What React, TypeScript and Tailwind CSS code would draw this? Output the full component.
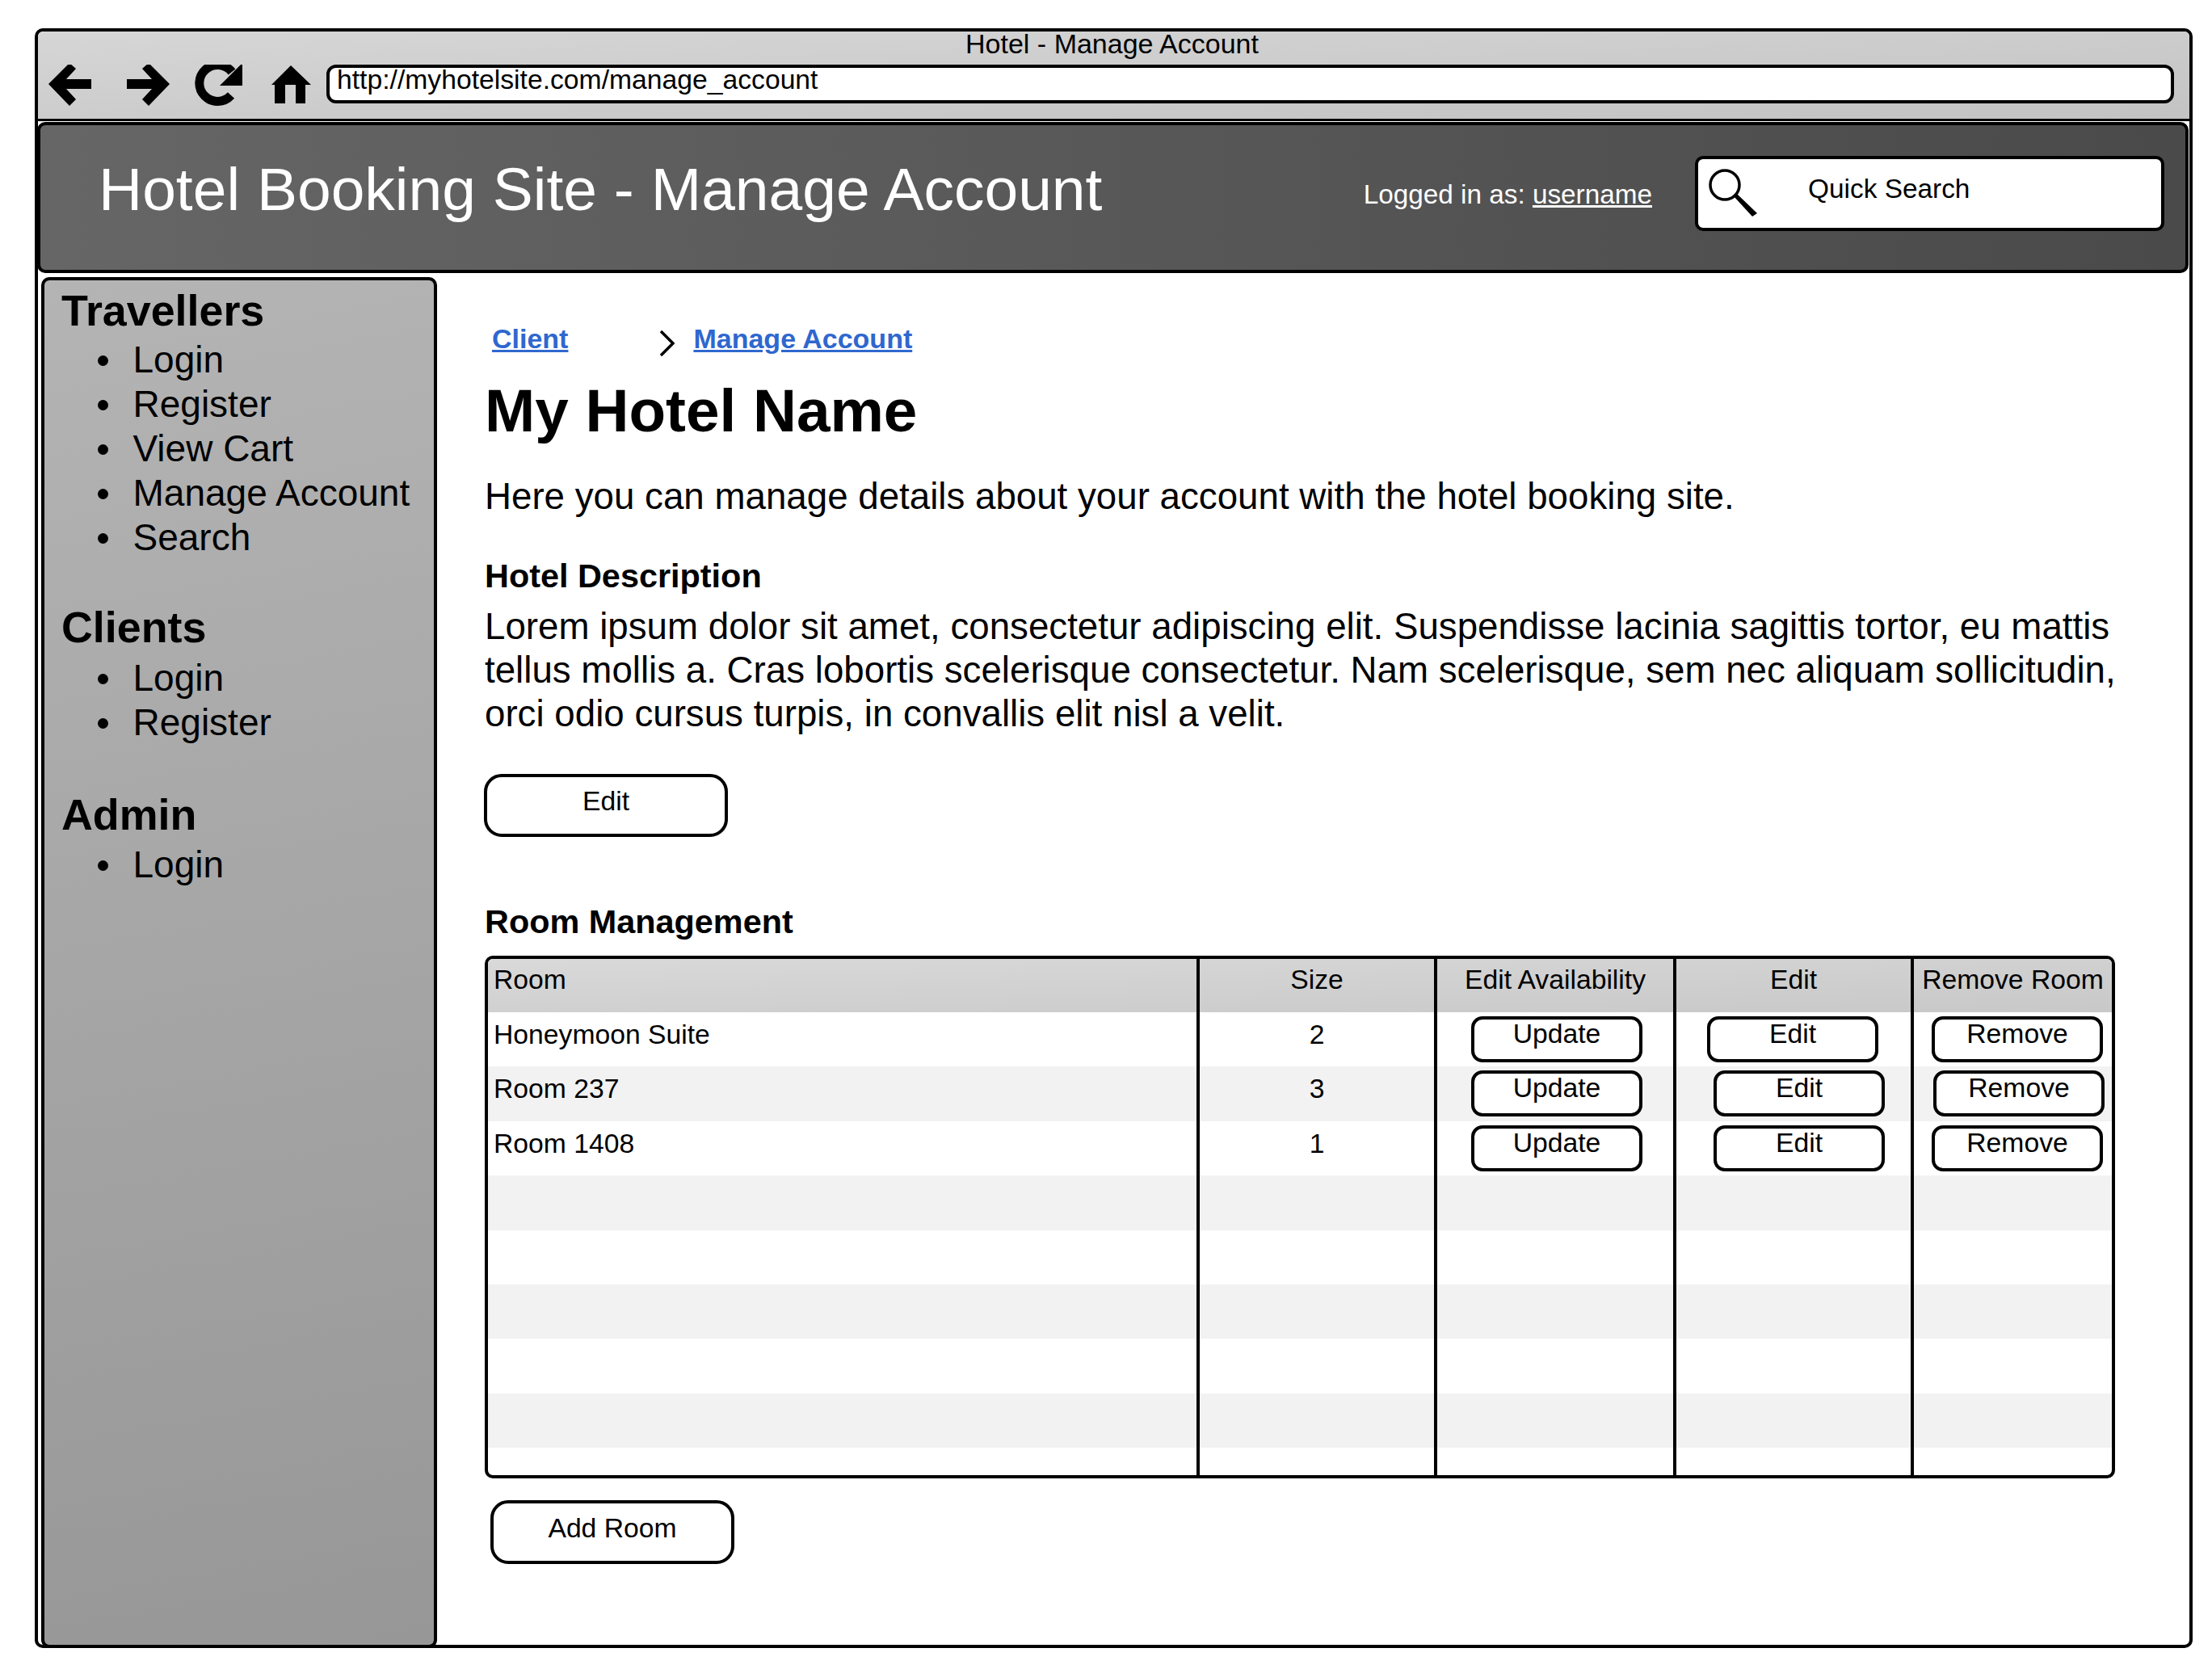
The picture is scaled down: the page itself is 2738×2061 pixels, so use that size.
import React from "react";

const font = { fontFamily: '"Liberation Sans", Arial, sans-serif' };

function NavIcons() {
  return (
    <svg className="shrink-0 w-[354px] h-[52px]" viewBox="3 20 354 52">
      <polygon points="16,44 42,18 50,25 38,38 69,38 69,50 38,50 50,63 42,71" fill="#000" />
      <polygon points="166,44 140,18 132,25 144,38 113,38 113,50 144,50 132,63 140,71" fill="#000" />
      <path d="M242 58 A22.5 22.5 0 1 1 243 29" fill="none" stroke="#000" strokeWidth="11" />
      <polygon points="256,18 256,46 228,46" fill="#000" />
      <polygon points="316,21 341,45 334,45 334,68 322,68 322,45 309,45 309,68 296,68 296,45 292,45" fill="#000" />
    </svg>
  );
}

function Magnifier() {
  return (
    <svg className="absolute left-0 top-0 w-[100px] h-[85px]" viewBox="0 0 100 85">
      <g transform="translate(-6 -12)">
        <circle cx="39" cy="44" r="18" fill="none" stroke="#000" strokeWidth="3.5" />
        <polygon points="50,58 54,55 79,79 73,83" fill="#000" />
      </g>
    </svg>
  );
}

function NavSection({ title, items, listGap, className }: { title: string; items: string[]; listGap: string; className?: string }) {
  return (
    <section className={className}>
      <h2 className="text-[53.8px] leading-[54px] font-bold text-black">{title}</h2>
      <ul className={`pl-[44.5px] text-[46px] leading-[55px] text-black ${listGap}`}>
        {items.map((i) => (
          <li key={i} className="flex">
            <span className="shrink-0 w-[13px] h-[13px] rounded-full bg-black mt-[22px] mr-[31px]" />
            {i}
          </li>
        ))}
      </ul>
    </section>
  );
}

function Btn({ label, className }: { label: string; className: string }) {
  return (
    <button className={`flex justify-center items-start bg-white border-[4px] border-black text-[33.7px] leading-[34px] text-black ${className}`}>
      {label}
    </button>
  );
}

const rows = [
  { name: "Honeymoon Suite", size: "2", edit: "ml-[38px]", remove: "ml-[22px]" },
  { name: "Room 237", size: "3", edit: "ml-[46px]", remove: "ml-[24px]" },
  { name: "Room 1408", size: "1", edit: "ml-[46px]", remove: "ml-[22px]" },
];

const gridCols = "grid grid-cols-[881px_294px_296px_294px_1fr]";
const line = "border-r-[4px] border-black";

export default function App() {
  return (
    <div className="w-[2738px] h-[2061px] bg-white pt-[35px] pl-[43px] text-black" style={font}>
      <div className="w-[2671px] h-[2004.5px] border-[4px] border-black rounded-[10px] flex flex-col">
        <div className="h-[111px] shrink-0 border-b-[3px] border-black rounded-t-[7px] bg-linear-to-br from-[#d6d6d6] to-[#c3c3c3]">
          <div className="-mt-[2.5px] text-center text-[34px] leading-[34px] h-[43.5px] pr-[4px]">Hotel - Manage Account</div>
          <div className="flex items-start">
            <NavIcons />
            <div className="ml-[3px] mr-[19px] flex-1 h-[48px] bg-white border-[4px] border-black rounded-[12px] pl-[9px] text-[33.7px] leading-[29px]">
              http://myhotelsite.com/manage_account
            </div>
          </div>
        </div>

        <header className="shrink-0 -ml-[1px] mt-[1px] mr-[1px] h-[187px] border-[4px] border-black rounded-[10px] bg-linear-to-r from-[#666666] to-[#4a4a4a] flex items-start">
          <div className="text-white text-[75px] leading-[80px] ml-[72px] mt-[39px]">Hotel Booking Site - Manage Account</div>
          <div className="ml-auto text-white text-[33.3px] leading-[34px] mt-[69px]">
            Logged in as: <span className="underline">username</span>
          </div>
          <div className="relative ml-[53px] mr-[26px] mt-[38px] w-[581px] h-[93px] bg-white border-[4px] border-black rounded-[10px] pl-[136px] pt-[20px] text-[33.4px] leading-[34px] text-black">
            <Magnifier />
            Quick Search
          </div>
        </header>

        <div className="flex items-start mt-[5px]">
          <aside className="shrink-0 ml-[4px] w-[490px] h-[1697px] border-[4px] border-black rounded-[10px] pt-[10px] pl-[21px] bg-linear-[170deg] from-[#b4b4b4] to-[#979797]">
            <NavSection listGap="mt-[7px]" title="Travellers" items={["Login", "Register", "View Cart", "Manage Account", "Search"]} />
            <NavSection listGap="mt-[9px]" className="mt-[56.3px]" title="Clients" items={["Login", "Register"]} />
            <NavSection listGap="mt-[8px]" className="mt-[59px]" title="Admin" items={["Login"]} />
          </aside>

          <main className="ml-[59px] pt-[56px] flex-1 min-w-0">
            <nav className="flex h-[40px] items-start text-[34px] leading-[40px] font-bold text-[#2f67cf]">
              <a className="ml-[9px] underline">Client</a>
              <svg className="ml-[113px] mt-[10px] w-[19px] h-[32px]" viewBox="0 0 19 32">
                <path d="M2 1 L17 16 L2 31" fill="none" stroke="#000" strokeWidth="3.5" />
              </svg>
              <a className="ml-[23px] underline">Manage Account</a>
            </nav>
            <h1 className="mt-[29px] text-[74.7px] leading-[80px] font-bold">My Hotel Name</h1>
            <p className="mt-[40px] text-[45.7px] leading-[54px]">
              Here you can manage details about your account with the hotel booking site.
            </p>
            <h3 className="mt-[47px] text-[41.4px] leading-[48px] font-bold">Hotel Description</h3>
            <p className="mt-[11.5px] w-[2040px] text-[45.7px] leading-[54px]">
              Lorem ipsum dolor sit amet, consectetur adipiscing elit. Suspendisse lacinia sagittis tortor, eu mattis tellus mollis a. Cras lobortis scelerisque consectetur. Nam scelerisque, sem nec aliquam sollicitudin, orci odio cursus turpis, in convallis elit nisl a velit.
            </p>
            <Btn label="Edit" className="mt-[47px] -ml-[1px] w-[302px] h-[78px] rounded-[22px] pt-[12px]" />
            <h3 className="mt-[81.5px] text-[41.4px] leading-[48px] font-bold">Room Management</h3>

            <div className="mt-[18px] w-[2018px] h-[647px] border-[4px] border-black rounded-[10px] overflow-hidden flex flex-col text-[33.7px] leading-[34px]">
              <div className={`${gridCols} h-[66px] shrink-0 bg-linear-to-br from-[#d9d9d9] to-[#c8c8c8]`}>
                <div className={`${line} pl-[7px] pt-[8px]`}>Room</div>
                <div className={`${line} text-center pt-[8px]`}>Size</div>
                <div className={`${line} text-center pt-[8px]`}>Edit Availability</div>
                <div className={`${line} text-center pt-[8px]`}>Edit</div>
                <div className="text-center pt-[8px]">Remove Room</div>
              </div>
              {[0, 1, 2, 3, 4, 5, 6, 7].map((i) => {
                const r = rows[i];
                return (
                  <div key={i} className={`${gridCols} h-[67.4px] shrink-0 ${i % 2 === 1 ? "bg-[#f2f2f2]" : "bg-white"}`}>
                    <div className={`${line} pl-[7px] pt-[10px]`}>{r?.name}</div>
                    <div className={`${line} text-center pt-[10px]`}>{r?.size}</div>
                    <div className={`${line} pt-[5px]`}>
                      {r && <Btn label="Update" className="ml-[42px] w-[212px] h-[57px] rounded-[14px]" />}
                    </div>
                    <div className={`${line} pt-[5px]`}>
                      {r && <Btn label="Edit" className={`${r.edit} w-[212px] h-[57px] rounded-[14px]`} />}
                    </div>
                    <div className="pt-[5px]">
                      {r && <Btn label="Remove" className={`${r.remove} w-[212px] h-[57px] rounded-[14px]`} />}
                    </div>
                  </div>
                );
              })}
              <div className={`${gridCols} flex-1`}>
                <div className={line} />
                <div className={line} />
                <div className={line} />
                <div className={line} />
                <div />
              </div>
            </div>
            <Btn label="Add Room" className="mt-[27px] ml-[7px] w-[302px] h-[79px] rounded-[22px] pt-[13px]" />
          </main>
        </div>
      </div>
    </div>
  );
}
